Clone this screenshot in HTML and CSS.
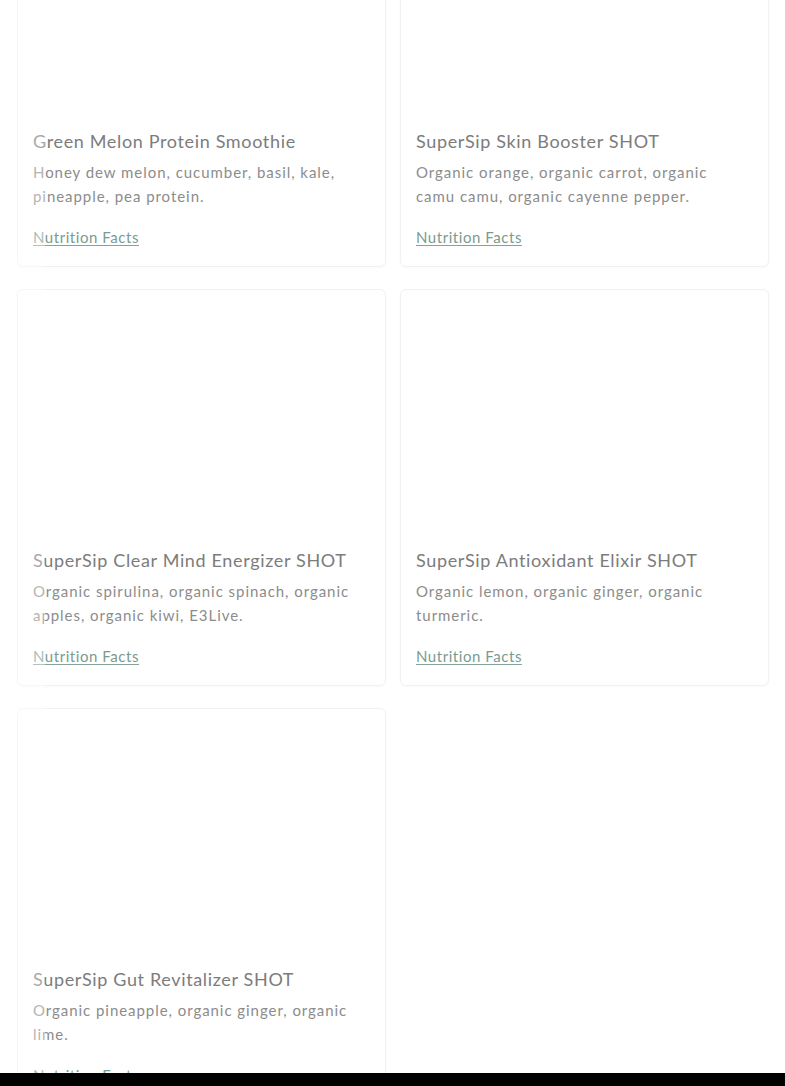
FILE: index.html
```html
<!DOCTYPE html>
<html lang="en">
<head>
<meta charset="utf-8">
<title>SuperSip Menu</title>
<link rel="stylesheet" href="styles.css">
</head>
<body>
<main class="grid">
  <article class="card">
    <div class="card-media"></div>
    <div class="card-body">
      <h3 class="card-title">Green Melon Protein Smoothie</h3>
      <p class="card-desc">Honey dew melon, cucumber, basil, kale, pineapple, pea protein.</p>
      <a class="card-link" href="#">Nutrition Facts</a>
    </div>
  </article>
  <article class="card">
    <div class="card-media"></div>
    <div class="card-body">
      <h3 class="card-title">SuperSip Skin Booster SHOT</h3>
      <p class="card-desc">Organic orange, organic carrot, organic camu camu, organic cayenne pepper.</p>
      <a class="card-link" href="#">Nutrition Facts</a>
    </div>
  </article>
  <article class="card">
    <div class="card-media"></div>
    <div class="card-body">
      <h3 class="card-title">SuperSip Clear Mind Energizer SHOT</h3>
      <p class="card-desc">Organic spirulina, organic spinach, organic apples, organic kiwi, E3Live.</p>
      <a class="card-link" href="#">Nutrition Facts</a>
    </div>
  </article>
  <article class="card">
    <div class="card-media"></div>
    <div class="card-body">
      <h3 class="card-title">SuperSip Antioxidant Elixir SHOT</h3>
      <p class="card-desc">Organic lemon, organic ginger, organic turmeric.</p>
      <a class="card-link" href="#">Nutrition Facts</a>
    </div>
  </article>
  <article class="card">
    <div class="card-media"></div>
    <div class="card-body">
      <h3 class="card-title">SuperSip Gut Revitalizer SHOT</h3>
      <p class="card-desc">Organic pineapple, organic ginger, organic lime.</p>
      <a class="card-link" href="#">Nutrition Facts</a>
    </div>
  </article>
</main>
<div class="edge-fade"></div>
<div class="bottom-bar"></div>
</body>
</html>
```

FILE: styles.css
```css
html, body {
  margin: 0;
  padding: 0;
  background: #ffffff;
}

body {
  font-family: "Lato", "Open Sans", sans-serif;
  color: #808080;
  overflow: hidden;
  height: 1086px;
}

.grid {
  display: grid;
  grid-template-columns: 369px 369px;
  column-gap: 14px;
  row-gap: 22px;
  padding: 0 16px 0 17px;
  margin-top: -130px;
}

.card {
  border: 1px solid #f1f1f1;
  border-radius: 6px;
  box-shadow: 0 1px 3px rgba(0, 0, 0, 0.025);
  background: #fff;
  height: 397px;
  box-sizing: border-box;
  display: flex;
  flex-direction: column;
}

.card-media {
  height: 243px;
  flex: none;
}

.card-body {
  padding: 15px 20px 17px 15px;
  display: flex;
  flex-direction: column;
  align-items: flex-start;
}

.card-title {
  margin: 0;
  font-size: 18px;
  line-height: 24px;
  font-weight: 400;
  color: #7c7c7c;
  letter-spacing: 0.65px;
  white-space: nowrap;
}

.card-desc {
  margin: 7px 0 0 0;
  font-size: 15px;
  line-height: 24px;
  color: #8c8c8c;
  letter-spacing: 0.95px;
  height: 48px;
}

.card-link {
  margin-top: 17px;
  font-size: 15px;
  line-height: 24px;
  color: #7a9b91;
  text-decoration: underline;
  text-decoration-color: #86a399;
  text-underline-offset: 2px;
  letter-spacing: 0.55px;
}

.edge-fade {
  position: fixed;
  left: 0;
  top: 0;
  bottom: 0;
  width: 45px;
  background: rgba(255, 255, 255, 0.35);
  pointer-events: none;
}

.bottom-bar {
  position: fixed;
  left: 0;
  right: 0;
  bottom: 0;
  height: 13px;
  background: #000;
}
```
